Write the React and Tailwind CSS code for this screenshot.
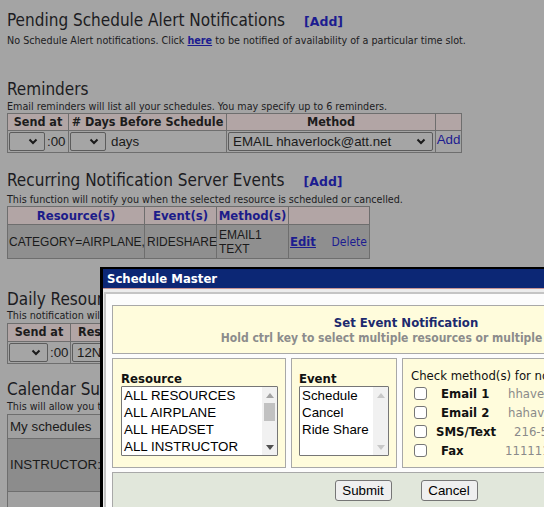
import React from "react";

const V = "font-['DejaVu_Sans_Condensed','DejaVu_Sans',sans-serif]";
const VS = "font-['DejaVu_Sans',sans-serif]";
const A = "font-['Liberation_Sans',Arial,sans-serif]";

function Chevron({ color = "#1a1a1a" }) {
  return (
    <svg width="10" height="7" viewBox="0 0 10 7">
      <path d="M1.5 1.5l3.5 3.5 3.5-3.5" fill="none" stroke={color} strokeWidth="2" />
    </svg>
  );
}

function FakeSelect({ w, text, bg = "bg-[#a5a5a5]" }) {
  return (
    <div className={`h-[19px] ${w} ${bg} border border-[#5c5c5c] rounded-[2px] flex items-center justify-between pl-[4px] pr-[6px]`}>
      <span className={`${A} text-[13.33px] text-[#1a1a1a] whitespace-nowrap`}>{text}</span>
      <Chevron />
    </div>
  );
}

function Heading({ children, className = "" }) {
  return (
    <div className={`${V} text-[17px] leading-[20px] text-[#1c1c22] whitespace-nowrap ${className}`}>{children}</div>
  );
}

function Desc({ children, className = "" }) {
  return (
    <div className={`${V} text-[10.7px] leading-[12px] text-[#1c1c22] whitespace-nowrap ${className}`}>{children}</div>
  );
}

function AddLink() {
  return <span className={`ml-[19px] ${VS} font-bold text-[12.5px] text-[#1c1c90]`}>[Add]</span>;
}

const th = `${V} font-bold text-[12.5px] text-[#1c1c1c] bg-[#b2a5a5] border-r border-b border-[#6e6e6e] flex items-center justify-center whitespace-nowrap`;
const thBlue = `${V} font-bold text-[13px] text-[#1c1c8a] bg-[#b2a5a5] border-r border-b border-[#6e6e6e] flex items-center justify-center whitespace-nowrap`;
const td = "border-r border-b border-[#6e6e6e] flex items-center";

function ScrollArrow({ up, color }) {
  return (
    <svg width="8" height="5" viewBox="0 0 8 5">
      <polygon points={up ? "0,5 4,0 8,5" : "0,0 4,5 8,0"} fill={color} />
    </svg>
  );
}

function ListBox({ w, items, enabled }) {
  return (
    <div className={`${w} h-[70px] border border-[#767676] bg-white flex rounded-[1px]`}>
      <div className="flex-1 pl-[2px] overflow-hidden">
        {items.map((it) => (
          <div key={it} className={`${A} text-[13.33px] leading-[17px] text-black whitespace-nowrap`}>{it}</div>
        ))}
      </div>
      <div className="w-[15px] bg-[#f1f1f1] flex flex-col items-center">
        <div className="h-[16px] flex items-center justify-center">
          <ScrollArrow up color={enabled ? "#a3a3a3" : "#c8c8c8"} />
        </div>
        <div className="flex-1 w-full flex flex-col items-center">
          {enabled && <div className="w-[11px] h-[18px] bg-[#c1c1c1]" />}
        </div>
        <div className="h-[16px] flex items-center justify-center">
          <ScrollArrow color={enabled ? "#505050" : "#c8c8c8"} />
        </div>
      </div>
    </div>
  );
}

function Check() {
  return <div className="w-[13px] h-[13px] border border-[#767676] rounded-[3px] bg-white shrink-0" />;
}

function MethodRow({ ml, lw, label, value, vml = "" }) {
  return (
    <div className="h-[19px] flex items-center pl-[11px]">
      <Check />
      <div className={`${V} font-bold text-[13px] text-[#111] whitespace-nowrap ${ml} ${lw}`}>{label}</div>
      <div className={`${V} text-[13px] text-[#8a8a8a] whitespace-nowrap ${vml}`}>{value}</div>
    </div>
  );
}

export default function App() {
  return (
    <div className="relative w-[544px] h-[507px] overflow-hidden bg-[#a4a4a4]">
      <div className="pl-[7px]">
        {/* Pending */}
        <Heading className="pt-[10px]">
          Pending Schedule Alert Notifications
          <AddLink />
        </Heading>
        <Desc className="mt-[3px]">
          No Schedule Alert notifications. Click{" "}
          <span className="font-bold underline text-[#1c1c90]">here</span> to be notified of availability of a particular time slot.
        </Desc>

        {/* Reminders */}
        <Heading className="mt-[32px]">Reminders</Heading>
        <Desc className="mt-[2px]">Email reminders will list all your schedules. You may specify up to 6 reminders.</Desc>
        <div className="grid grid-cols-[61px_158px_209px_26px] grid-rows-[17px_22px] w-fit border-l border-t border-[#6e6e6e]">
          <div className={th}>Send at</div>
          <div className={th}># Days Before Schedule</div>
          <div className={th}>Method</div>
          <div className={th}></div>
          <div className={`${td} pl-[1px]`}>
            <FakeSelect w="w-[36px]" text="" />
            <span className={`${A} text-[13.33px] text-[#1a1a1a] ml-[2px]`}>:00</span>
          </div>
          <div className={`${td} pl-[1px]`}>
            <FakeSelect w="w-[36px]" text="" />
            <span className={`${A} text-[13.33px] text-[#1a1a1a] ml-[5px]`}>days</span>
          </div>
          <div className={`${td} pl-[1px]`}>
            <FakeSelect w="w-[205px]" text="EMAIL hhaverlock@att.net" />
          </div>
          <div className={`${td} justify-center`}>
            <span className={`${A} text-[13.33px] text-[#1c1c90] -mt-[3px]`}>Add</span>
          </div>
        </div>

        {/* Recurring */}
        <Heading className="mt-[17px]">
          Recurring Notification Server Events
          <AddLink />
        </Heading>
        <Desc className="mt-[2px]">This function will notify you when the selected resource is scheduled or cancelled.</Desc>
        <div className="grid grid-cols-[137px_72px_72px_81px] grid-rows-[18px_34px] w-fit border-l border-t border-[#6e6e6e]">
          <div className={thBlue}>Resource(s)</div>
          <div className={thBlue}>Event(s)</div>
          <div className={thBlue}>Method(s)</div>
          <div className={thBlue}></div>
          <div className={`${td} bg-[#8f8f8f] pl-[1px] ${A} text-[12px] text-[#1a1a1a] whitespace-nowrap`}>CATEGORY=AIRPLANE,</div>
          <div className={`${td} bg-[#8f8f8f] pl-[2px] ${A} text-[12px] text-[#1a1a1a]`}>RIDESHARE</div>
          <div className={`${td} bg-[#8f8f8f] pl-[2px] ${A} text-[12px] leading-[14px] text-[#1a1a1a]`}>
            <div>EMAIL1<br />TEXT</div>
          </div>
          <div className={`${td} bg-[#8f8f8f] pl-[1px] justify-between pr-[2px]`}>
            <span className={`${V} font-bold underline text-[13px] text-[#1c1c90]`}>Edit</span>
            <span className={`${V} text-[12px] text-[#1c1c90]`}>Delete</span>
          </div>
        </div>

        {/* Daily */}
        <Heading className="mt-[30px]">Daily Resource Schedule Notification</Heading>
        <Desc className="mt-[1px]">This notification will email you the daily schedule of the selected resources.</Desc>
        <div className="mt-[1px] grid grid-cols-[63px_200px] grid-rows-[18px_22px] w-fit border-l border-t border-[#6e6e6e]">
          <div className={th}>Send at</div>
          <div className={`${th} justify-start pl-[7px]`}>Resource</div>
          <div className={`${td} pl-[1px]`}>
            <FakeSelect w="w-[39px]" text="" />
            <span className={`${A} text-[13.33px] text-[#1a1a1a] ml-[2px]`}>:00</span>
          </div>
          <div className={`${td} pl-[1px]`}>
            <FakeSelect w="w-[120px]" text="12NOON" />
          </div>
        </div>

        {/* Calendar */}
        <Heading className="mt-[15px]">Calendar Subscriptions</Heading>
        <Desc className="mt-[2px]">This will allow you to subscribe to your schedules from a calendar program.</Desc>
        <div className="mt-[1px] grid grid-cols-[300px] grid-rows-[24px_53px_30px] w-fit border-l border-t border-[#6e6e6e]">
          <div className={`${td} bg-[#a0a0a0] pl-[2px] ${A} text-[13.33px] text-[#1a1a1a]`}>My schedules</div>
          <div className={`${td} bg-[#8c8c8c] pl-[2px] ${A} text-[13.33px] text-[#1a1a1a]`}>INSTRUCTOR:</div>
          <div className={`${td} bg-[#a0a0a0]`}></div>
        </div>
      </div>

      {/* Modal */}
      <div className="absolute left-[100px] top-[267px] w-[640px] h-[260px] bg-[#ececec] border-l-[3px] border-t-[2px] border-black">
        <div className={`h-[19px] bg-[#0c2775] text-white font-bold text-[13px] leading-[19px] pl-[4px] ${V}`}>Schedule Master</div>
        <div className="h-px bg-[#c89494]" />
        <div className="pt-[3px] pl-px">
          <div className="border-l-2 border-t-2 border-[#c4c4c4] bg-[#fcfcfc] pl-[6px] pt-[11px] h-[230px]">
            <div className="w-[588px] h-[49px] border border-[#a8a8a8] bg-[#fffcdc] flex flex-col items-center pt-[9px]">
              <div className={`${V} font-bold text-[13px] leading-[16px] text-[#1c2a6e]`}>Set Event Notification</div>
              <div className={`${V} font-bold text-[12px] leading-[15px] text-[#8c8c8c] whitespace-nowrap`}>Hold ctrl key to select multiple resources or multiple events.</div>
            </div>
            <div className="mt-[4px] flex gap-[5px] h-[110px]">
              <div className="w-[174px] border border-[#a8a8a8] bg-[#fffcdc] pl-[8px] pt-[12px]">
                <div className={`${V} font-bold text-[13px] leading-[15px] text-[#111]`}>Resource</div>
                <ListBox w="w-[157px]" enabled items={["ALL RESOURCES", "ALL AIRPLANE", "ALL HEADSET", "ALL INSTRUCTOR"]} />
              </div>
              <div className="w-[106px] border border-[#a8a8a8] bg-[#fffcdc] pl-[7px] pt-[12px]">
                <div className={`${V} font-bold text-[13px] leading-[15px] text-[#111]`}>Event</div>
                <ListBox w="w-[90px]" items={["Schedule", "Cancel", "Ride Share"]} />
              </div>
              <div className="w-[298px] border border-[#a8a8a8] bg-[#fffcdc] pt-[9px]">
                <div className={`${V} text-[13px] leading-[15px] text-[#111] pl-[8px] whitespace-nowrap`}>Check method(s) for notification:</div>
                <div className="mt-[1px]">
                  <MethodRow ml="ml-[14px]" lw="w-[67px]" label="Email 1" value="hhaverlock@att.net" />
                  <MethodRow ml="ml-[14px]" lw="w-[67px]" label="Email 2" value="hahaverlock@gmail.com" />
                  <MethodRow ml="ml-[9px]" lw="w-[72px]" label="SMS/Text" value="216-555-1234" vml="ml-[6px]" />
                  <MethodRow ml="ml-[14px]" lw="w-[64px]" label="Fax" value="1111111111" />
                </div>
              </div>
            </div>
            <div className="mt-[4px] w-[588px] h-[50px] border border-[#a8a8a8] bg-[#e1e7db] flex justify-center gap-[29px] pt-[7px]">
              <button className={`w-[57px] h-[21px] bg-[#efefef] border border-[#767676] rounded-[3px] ${A} text-[13.33px] text-black`}>Submit</button>
              <button className={`w-[57px] h-[21px] bg-[#efefef] border border-[#767676] rounded-[3px] ${A} text-[13.33px] text-black`}>Cancel</button>
            </div>
          </div>
        </div>
      </div>
    </div>
  );
}
